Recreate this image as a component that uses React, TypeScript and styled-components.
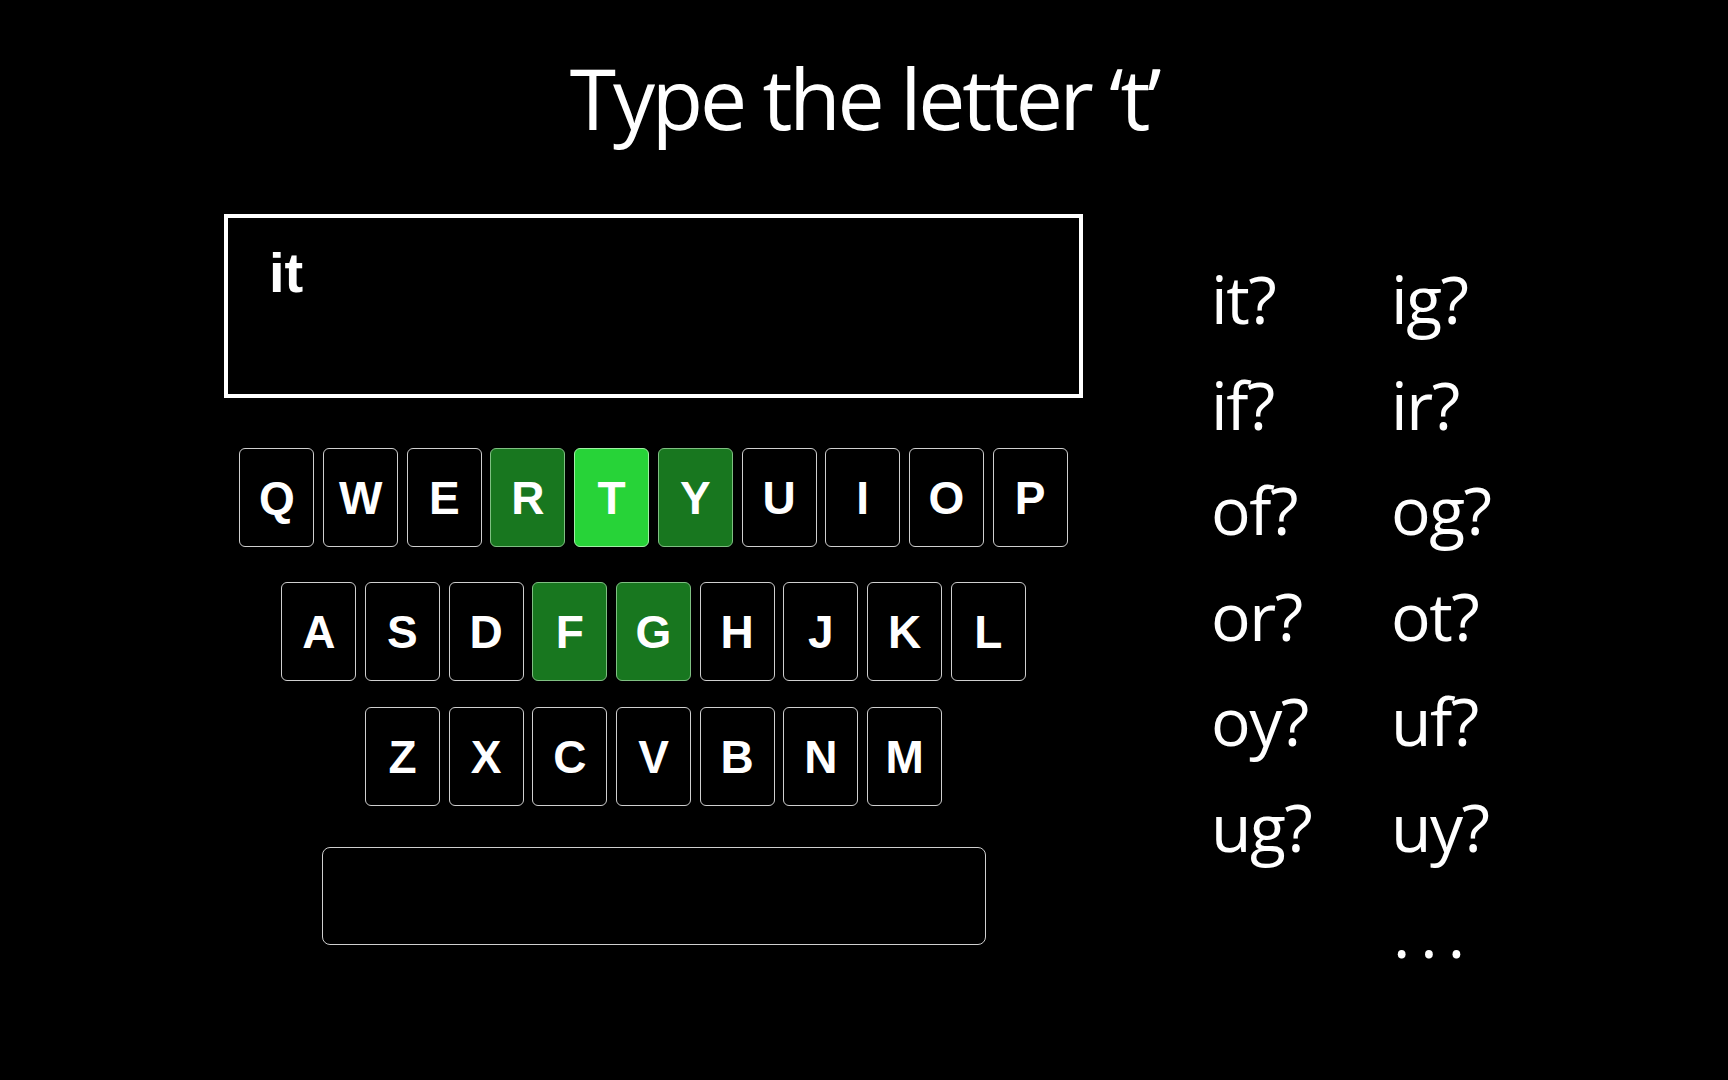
import React from "react";
import styled, { createGlobalStyle } from "styled-components";

const GlobalStyle = createGlobalStyle`
  html, body {
    margin: 0;
    padding: 0;
    background: #000;
  }
  body {
    width: 1728px;
    height: 1080px;
    overflow: hidden;
    font-family: "Open Sans", "Noto Sans", sans-serif;
  }
`;

const Page = styled.div`
  display: flex;
  flex-direction: column;
  width: 1728px;
  height: 1080px;
  padding-top: 56px;
  box-sizing: border-box;
  background: #000;
  color: #fff;
`;

const Title = styled.h1`
  margin: 0;
  text-align: center;
  font-family: "Open Sans", "Noto Sans", sans-serif;
  font-weight: 400;
  font-size: 84px;
  line-height: 84px;
  letter-spacing: -3.2px;
  color: #fff;
`;

const Main = styled.div`
  display: flex;
  flex-direction: row;
  align-items: flex-start;
  margin-top: 74px;
  padding-left: 224px;
`;

const LeftColumn = styled.div`
  display: flex;
  flex-direction: column;
  align-items: center;
  width: 859px;
`;

const TextBox = styled.div`
  box-sizing: border-box;
  width: 859px;
  height: 184px;
  border: 4px solid #fff;
  padding: 27px 0 0 41px;
`;

const Typed = styled.span`
  display: block;
  font-family: "Liberation Sans", Arial, sans-serif;
  font-weight: 700;
  font-size: 56px;
  line-height: 56px;
  color: #fff;
`;

const KeyRow = styled.div<{ $top: number }>`
  display: flex;
  flex-direction: row;
  gap: 8.7px;
  margin-top: ${(p) => p.$top}px;
`;

type KeyState = "idle" | "near" | "target";

const Key = styled.div<{ $state: KeyState }>`
  box-sizing: border-box;
  width: 75px;
  height: 99px;
  border-radius: 6px;
  display: flex;
  align-items: center;
  justify-content: center;
  font-family: "Liberation Sans", Arial, sans-serif;
  font-weight: 700;
  font-size: 46px;
  color: #fff;
  background: ${(p) =>
    p.$state === "target" ? "#27d338" : p.$state === "near" ? "#18771f" : "#000"};
  border: 1.5px solid
    ${(p) =>
      p.$state === "target" ? "#9ff0a4" : p.$state === "near" ? "#7fbf82" : "#cfcfcf"};
`;

const SpaceBar = styled.div`
  box-sizing: border-box;
  width: 664px;
  height: 98px;
  margin-top: 41px;
  border: 1.5px solid #cfcfcf;
  border-radius: 8px;
  background: #000;
`;

const Suggestions = styled.div`
  display: grid;
  grid-template-columns: 180px auto;
  margin-top: 32px;
  margin-left: 128px;
  font-family: "Open Sans", "Noto Sans", sans-serif;
  font-weight: 400;
  font-size: 66px;
  line-height: 105.6px;
  letter-spacing: -1.5px;
  color: #fff;
`;

const Word = styled.div``;

const Ellipsis = styled.div`
  grid-column: 2;
  letter-spacing: 10px;
  padding-left: 2px;
`;

const rows: { top: number; keys: string[] }[] = [
  { top: 50, keys: ["Q", "W", "E", "R", "T", "Y", "U", "I", "O", "P"] },
  { top: 35, keys: ["A", "S", "D", "F", "G", "H", "J", "K", "L"] },
  { top: 26, keys: ["Z", "X", "C", "V", "B", "N", "M"] },
];

const near = new Set(["R", "Y", "F", "G"]);
const target = "T";

const words = [
  "it?", "ig?",
  "if?", "ir?",
  "of?", "og?",
  "or?", "ot?",
  "oy?", "uf?",
  "ug?", "uy?",
];

export default function App() {
  return (
    <>
      <GlobalStyle />
      <Page>
        <Title>Type the letter ‘t’</Title>
        <Main>
          <LeftColumn>
            <TextBox>
              <Typed>it</Typed>
            </TextBox>
            {rows.map((row, i) => (
              <KeyRow key={i} $top={row.top}>
                {row.keys.map((k) => (
                  <Key
                    key={k}
                    $state={k === target ? "target" : near.has(k) ? "near" : "idle"}
                  >
                    {k}
                  </Key>
                ))}
              </KeyRow>
            ))}
            <SpaceBar />
          </LeftColumn>
          <Suggestions>
            {words.map((w) => (
              <Word key={w}>{w}</Word>
            ))}
            <Ellipsis>...</Ellipsis>
          </Suggestions>
        </Main>
      </Page>
    </>
  );
}
